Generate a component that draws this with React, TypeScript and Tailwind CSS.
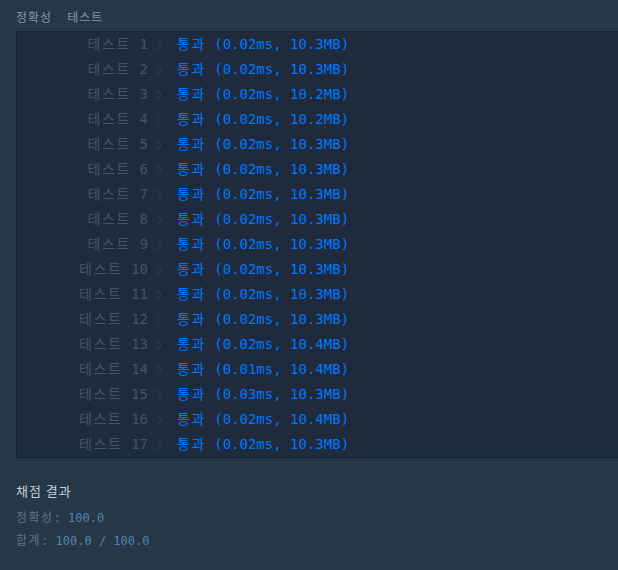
const results = [
  ['0.02', '10.3'], ['0.02', '10.3'], ['0.02', '10.2'], ['0.02', '10.2'],
  ['0.02', '10.3'], ['0.02', '10.3'], ['0.02', '10.3'], ['0.02', '10.3'],
  ['0.02', '10.3'], ['0.02', '10.3'], ['0.02', '10.3'], ['0.02', '10.3'],
  ['0.02', '10.4'], ['0.01', '10.4'], ['0.03', '10.3'], ['0.02', '10.4'],
  ['0.02', '10.3'],
];

const mono = "font-['DejaVu_Sans_Mono','Noto_Sans_CJK_KR',monospace]";

function Chevron() {
  return (
    <svg width="6" height="12" viewBox="0 0 6 12" className="text-[#34435a]">
      <path d="M0.5 0.5 L5 6 L0.5 11.5" fill="none" stroke="currentColor" strokeWidth="1" />
    </svg>
  );
}

export default function App() {
  return (
    <div className="w-[618px] h-[570px] bg-[#263747] overflow-hidden font-['Noto_Sans_CJK_KR',sans-serif]">
      <div className="h-[31px] pt-[9px] pl-4 flex gap-[15px] text-[12px] leading-[16px] text-[#7e97aa] tracking-[1px]">
        <span>정확성</span>
        <span>테스트</span>
      </div>

      <div className={`ml-4 bg-[#1f2a3c] border-t border-l border-b border-[#172230] text-[14px] ${mono}`}>
        {results.map((r, i) => (
          <div key={i} className="h-[25px] flex items-center">
            <span className="w-[131px] text-right text-[#43546a] whitespace-pre"><span className="tracking-[1.7px]">테스트</span> {i + 1}</span>
            <span className="ml-[8px] w-[21px] flex items-center"><Chevron /></span>
            <span className="text-[#0078ff] whitespace-pre"><span className="tracking-[1.5px]">통과</span> ({r[0]}ms, {r[1]}MB)</span>
          </div>
        ))}
      </div>

      <div className="pl-4 pt-[23px]">
        <div className="text-[13px] leading-[20px] text-[#c2cfd9] tracking-[1px]">채점 결과</div>
        <div className={`mt-[7px] text-[12px] leading-[20px] ${mono}`}>
          <div className="whitespace-pre"><span className="text-[#5d7589]"><span className="tracking-[1.5px]">정확성</span>: </span><span className="text-[#5483ad]">100.0</span></div>
          <div className="mt-[3px] whitespace-pre"><span className="text-[#5d7589]"><span className="tracking-[1.5px]">합계</span>: </span><span className="text-[#5483ad]">100.0 / 100.0</span></div>
        </div>
      </div>
    </div>
  );
}
